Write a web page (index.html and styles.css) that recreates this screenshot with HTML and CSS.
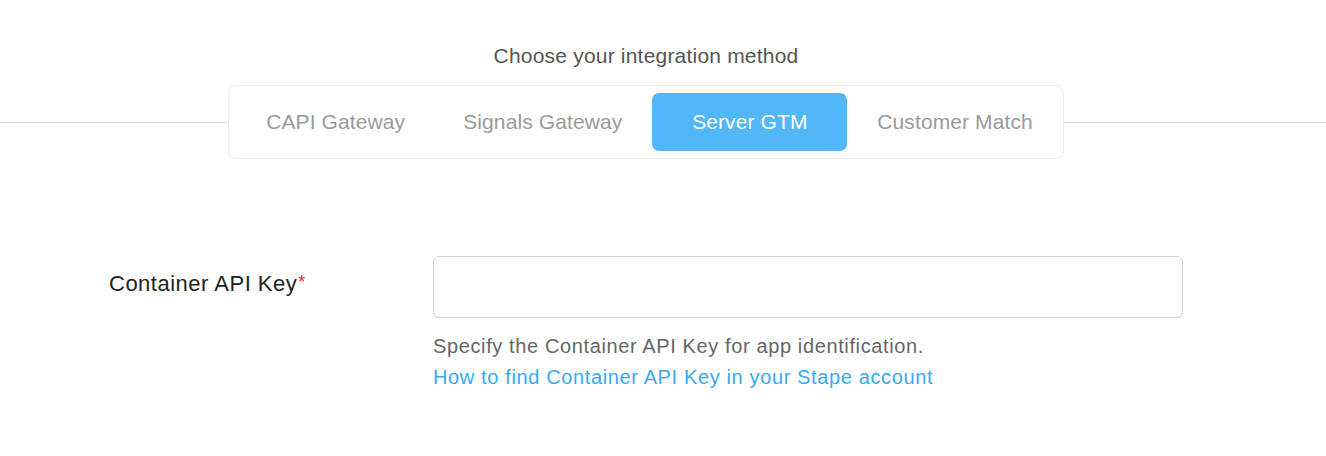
FILE: index.html
```html
<!DOCTYPE html>
<html>
<head>
<meta charset="utf-8">
<link rel="stylesheet" href="styles.css">
</head>
<body>
<div class="page">
  <div class="title">Choose your integration method</div>
  <div class="tab-row">
    <div class="tabs">
      <div class="tab">CAPI Gateway</div>
      <div class="tab">Signals Gateway</div>
      <div class="tab active">Server GTM</div>
      <div class="tab">Customer Match</div>
    </div>
  </div>
  <div class="form-row">
    <div class="label">Container API Key<span class="req">*</span></div>
    <div class="field">
      <input class="input" type="text">
      <div class="help">Specify the Container API Key for app identification.</div>
      <a class="link" href="#">How to find Container API Key in your Stape account</a>
    </div>
  </div>
</div>
</body>
</html>
```
FILE: styles.css
```css
html, body {
  margin: 0;
  padding: 0;
  background: #fff;
}
body {
  font-family: "Liberation Sans", Arial, sans-serif;
}
.page {
  padding-top: 44px;
}
.title {
  text-align: center;
  font-size: 21px;
  letter-spacing: 0.2px;
  line-height: 24px;
  color: #555;
  padding-right: 34px;
}
.tab-row {
  position: relative;
  margin-top: 17px;
  display: flex;
  justify-content: center;
  padding-right: 34px;
}
.tab-row::before {
  content: "";
  position: absolute;
  left: 0;
  right: 0;
  top: 37px;
  height: 1px;
  background: #e3e3e3;
}
.tabs {
  position: relative;
  display: flex;
  gap: 3px;
  padding: 7px 3px 7px 9px;
  background: #fff;
  border: 1px solid #ebebeb;
  border-radius: 8px;
  box-sizing: border-box;
  height: 74px;
}
.tab {
  min-width: 195px;
  box-sizing: border-box;
  padding: 0 27px 1px;
  height: 58px;
  display: flex;
  align-items: center;
  justify-content: center;
  font-size: 21px;
  letter-spacing: 0.1px;
  color: #9a9a9a;
  border-radius: 7px;
  white-space: nowrap;
}
.tab.active {
  background: #52b7f7;
  color: #fff;
}
.form-row {
  display: flex;
  margin-top: 97px;
  padding-left: 109px;
}
.label {
  width: 324px;
  padding-top: 16px;
  font-size: 22px;
  letter-spacing: 0.5px;
  line-height: 24px;
  color: #222;
}
.req {
  color: #ee2222;
  position: relative;
  top: -3px;
  font-size: 18px;
  margin-left: 1px;
}
.field {
  display: flex;
  flex-direction: column;
  width: 750px;
}
.input {
  width: 750px;
  height: 62px;
  box-sizing: border-box;
  border: 1px solid #cfcfcf;
  border-radius: 6px;
  margin: 0;
  outline: none;
}
.help {
  margin-top: 13px;
  font-size: 20px;
  letter-spacing: 0.62px;
  line-height: 31px;
  color: #666;
}
.link {
  font-size: 20px;
  letter-spacing: 0.63px;
  line-height: 31px;
  color: #37aaf2;
  text-decoration: none;
}
```
